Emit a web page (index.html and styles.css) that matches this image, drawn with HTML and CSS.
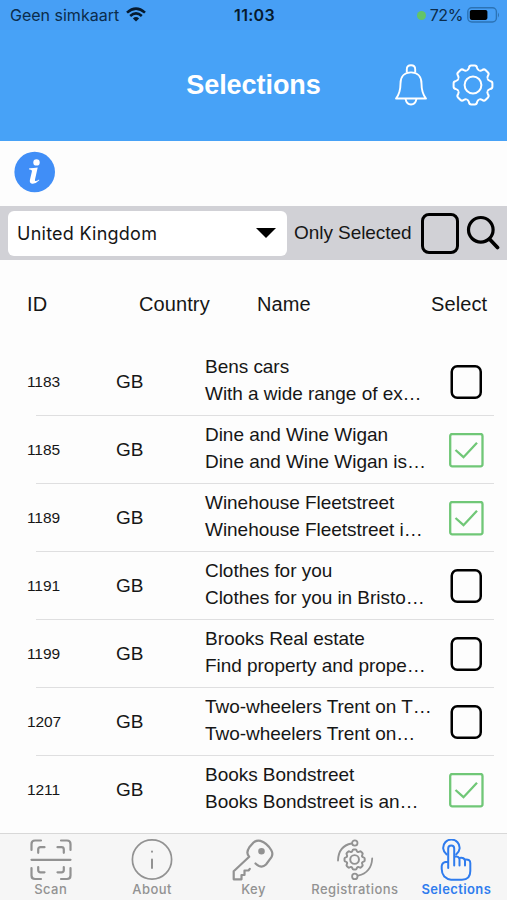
FILE: index.html
```html
<!DOCTYPE html>
<html lang="en">
<head>
<meta charset="utf-8">
<title>Selections</title>
<link rel="stylesheet" href="styles.css">
</head>
<body>
<svg class="defs" width="0" height="0">
  <defs>
    <path id="tooth" d="M-6.1-14.8Q-4.6-15-4.1-17Q-3.7-19.4-1.8-19.4H1.8Q3.7-19.4 4.1-17Q4.6-15 6.1-14.8"/>
    <g id="gear">
      <use href="#tooth"/><use href="#tooth" transform="rotate(45)"/><use href="#tooth" transform="rotate(90)"/><use href="#tooth" transform="rotate(135)"/><use href="#tooth" transform="rotate(180)"/><use href="#tooth" transform="rotate(225)"/><use href="#tooth" transform="rotate(270)"/><use href="#tooth" transform="rotate(315)"/>
      <circle r="8.4"/>
    </g>
    <g id="box"><rect x="2.75" y="1.25" width="29" height="31.5" rx="5.5" fill="none" stroke="#000" stroke-width="2.5"/></g>
    <g id="checked" fill="none" stroke="#70c777"><rect x="1.2" y="1" width="32.300" height="32.300" rx="2" stroke-width="2.300"/><path d="M6.500 17L14.500 24.200L28 9.700" stroke-width="2.300"/></g>
  </defs>
</svg>
<div class="status">
  <div class="carrier"><span>Geen simkaart</span>
    <svg width="20" height="15" viewBox="0 0 20 15" fill="none" stroke="#061a2e" stroke-width="2.600"><path d="M1 5.600Q10-2.400 19 5.600"/><path d="M4.200 9Q10 3.800 15.800 9"/><path d="M6.900 11.400Q10 8.800 13.100 11.400L10 14.600Z" fill="#061a2e" stroke="none"/></svg>
  </div>
  <div class="time">11:03</div>
  <div class="power"><i class="dot"></i><span>72%</span>
    <svg width="33" height="16" viewBox="0 0 33 16"><rect x=".8" y=".8" width="28.600" height="14.200" rx="4" fill="none" stroke="#2c73b5" stroke-width="1.400"/><rect x="2.800" y="2.900" width="17.600" height="10" rx="1.800"/><path d="M31 5.500Q33 8 31 10.500Z" fill="#2c73b5"/></svg>
  </div>
</div>
<header class="header">
  <h1>Selections</h1>
  <div class="actions">
    <svg width="34" height="42" viewBox="0 0 34 42" fill="none" stroke="#fff" stroke-width="1.900" stroke-linejoin="round"><path d="M12.800 8.500V5.200Q12.800 1.200 17 1.200T21.200 5.200V8.500"/><path d="M2 34.500Q6.500 29 6.500 19.500C6.500 12 11 8.400 17 8.400S27.500 12 27.500 19.500Q27.500 29 32 34.500Z"/><path d="M11.500 34.600Q12.500 40.500 17 40.500T22.500 34.600"/></svg>
    <svg width="42" height="42" viewBox="-21 -21 42 42" fill="none" stroke="#fff" stroke-width="2"><use href="#gear"/></svg>
  </div>
</header>
<div class="inforow">
  <svg width="42" height="42" viewBox="0 0 42 42"><circle cx="20.700" cy="21" r="20.300" fill="#408ef7"/><circle cx="22.500" cy="11.400" r="3.200" fill="#fff"/><path d="M15.200 17.200Q19 17.300 23.700 16.500L21 28.500Q20.600 30.500 22 30Q23.500 29.500 25 28.500L25.300 29.300Q21.500 33.200 18 32.700Q15.300 32 15.900 29L17.900 20.500Q18.300 18.600 15.200 18.500Z" fill="#fff"/></svg>
</div>
<div class="filter">
  <div class="dropdown"><span>United Kingdom</span><i class="caret"></i></div>
  <span class="only">Only Selected</span>
  <i class="toggle"></i>
  <svg width="34" height="36" viewBox="0 0 34 36" fill="none" stroke="#000" stroke-linecap="round"><circle cx="14.800" cy="14.800" r="12.300" stroke-width="3.200"/><path d="M23.700 24.200L31.500 32.500" stroke-width="3.700"/></svg>
</div>
<div class="grid thead"><span>ID</span><span class="h-country">Country</span><span class="h-name">Name</span><span class="h-select">Select</span></div>
<main class="rows">
  <div class="grid row"><span class="id">1183</span><span class="code">GB</span><div class="name"><p>Bens cars</p><p>With a wide range of ex…</p></div><svg class="mark"><use href="#box"/></svg></div>
  <div class="grid row"><span class="id">1185</span><span class="code">GB</span><div class="name"><p>Dine and Wine Wigan</p><p>Dine and Wine Wigan is…</p></div><svg class="mark"><use href="#checked"/></svg></div>
  <div class="grid row"><span class="id">1189</span><span class="code">GB</span><div class="name"><p>Winehouse Fleetstreet</p><p>Winehouse Fleetstreet i…</p></div><svg class="mark"><use href="#checked"/></svg></div>
  <div class="grid row"><span class="id">1191</span><span class="code">GB</span><div class="name"><p>Clothes for you</p><p>Clothes for you in Bristo…</p></div><svg class="mark"><use href="#box"/></svg></div>
  <div class="grid row"><span class="id">1199</span><span class="code">GB</span><div class="name"><p>Brooks Real estate</p><p>Find property and prope…</p></div><svg class="mark"><use href="#box"/></svg></div>
  <div class="grid row"><span class="id">1207</span><span class="code">GB</span><div class="name"><p>Two-wheelers Trent on T…</p><p>Two-wheelers Trent on…</p></div><svg class="mark"><use href="#box"/></svg></div>
  <div class="grid row"><span class="id">1211</span><span class="code">GB</span><div class="name"><p>Books Bondstreet</p><p>Books Bondstreet is an…</p></div><svg class="mark"><use href="#checked"/></svg></div>
</main>
<nav class="tabs">
  <div class="tab"><svg width="42" height="42" viewBox="0 0 42 42" stroke-width="2.200"><path d="M1.500 11V5Q1.500 1.500 5 1.500H11M31 1.500H37Q40.500 1.500 40.500 5V11M40.500 29V36.500Q40.500 40 37 40H31M11 40H5Q1.500 40 1.500 36.500V29M8.200 13.800V10.500Q8.200 8.200 10.500 8.200H14.500M27.500 8.200H31.500Q33.800 8.200 33.800 10.500V13.800M33.800 28V31Q33.800 33.300 31.500 33.300H27.500M14.500 33.300H10.500Q8.200 33.300 8.200 31V28M1.500 20.800H40.500"/></svg><span>Scan</span></div>
  <div class="tab"><svg width="42" height="42" viewBox="0 0 42 42" stroke-width="1.700"><circle cx="21" cy="20.500" r="19.600"/><path d="M21 20.500V29M21 12.500V12.700" stroke-width="2"/></svg><span>About</span></div>
  <div class="tab"><svg width="42" height="42" viewBox="0 0 42 42" stroke-width="2.200"><path d="M17.200 17.700Q13.500 14 17.300 8.300L21.500 3.500Q24.500 .8 28.500 1.900Q35 4 39.300 11.200Q41.400 15 39.300 18.300L34 25.500Q30.800 28.600 27 27Q25 26 23.500 24.500M17.200 17.700L1.700 32.300V40.300H9.500V36H12.500V31.500H16.500L17.800 29.800"/><circle cx="29.500" cy="12.300" r="2.200" fill="currentColor"/></svg><span>Key</span></div>
  <div class="tab"><svg width="42" height="42" viewBox="0 0 42 42" stroke-width="1.800"><path d="M4 21.500Q4.500 7 17.500 4.500M38.200 19.500Q37.500 33.500 24 36.700"/><circle cx="20.800" cy="4" r="2.700"/><circle cx="20.800" cy="37.400" r="2.700"/><g transform="translate(20.600 20.500) scale(.52)" stroke-width="3.800"><use href="#gear"/></g></svg><span>Registrations</span></div>
  <div class="tab active"><svg width="42" height="42" viewBox="0 0 42 42" stroke-width="2"><path d="M11.600 15.400A8.200 8.200 0 1 1 21.200 15.400"/><path d="M13.200 29V9.500Q13.200 6.400 16.200 6.400T19.200 9.500V26.500M19.200 17.700Q24 16.500 24.500 20.500V26.500M24.500 19Q29.500 18 30 22V26.500M30 20.500Q35.300 20 35.300 24V32Q35.300 40.700 27 40.700H16Q12.500 40.500 9.300 37.500Q6.700 34.500 6.700 30V27Q7 22.700 13.200 22.700"/></svg><span>Selections</span></div>
</nav>
</body>
</html>
```
FILE: styles.css
```css
* { box-sizing: border-box; }
body {
  margin: 0;
  width: 507px;
  height: 900px;
  overflow: hidden;
  display: flex;
  flex-direction: column;
  background: #fdfdfd;
  color: #161616;
  font: 19px "Liberation Sans", Arial, sans-serif;
  letter-spacing: -.04px;
}
.defs { position: absolute; }
p, h1 { margin: 0; }
svg { display: block; flex: none; }

.status {
  height: 30px;
  padding: 0 7px 0 10px;
  display: grid;
  grid-template-columns: 1fr auto 1fr;
  align-items: center;
  background: #479ff5;
  color: #0b2c4b;
  font: 16px/30px Inter, sans-serif;
  letter-spacing: 0;
}
.carrier, .power { display: flex; align-items: center; }
.carrier { gap: 7px; }
.carrier svg { margin-top: -1px; }
.power { justify-content: flex-end; gap: 4px; letter-spacing: -.4px; }
.power svg { margin-top: -1px; }
.time { font-weight: 600; color: #061a2e; letter-spacing: .3px; margin-left: -1px; }
.dot { width: 9px; height: 9px; border-radius: 50%; background: #63c466; }

.header {
  height: 111px;
  padding-bottom: 2px;
  display: grid;
  grid-template-columns: 1fr auto 1fr;
  align-items: center;
  background: #47a2f7;
}
.header h1 {
  grid-column: 2;
  color: #fff;
  font-size: 27px;
  line-height: 30px;
  letter-spacing: -.05px;
}
.actions { display: flex; justify-content: flex-end; gap: 24px; padding-right: 13px; }

.inforow { height: 65px; padding: 10px 0 0 14px; }

.filter {
  height: 54px;
  padding: 0 7px 0 8px;
  display: flex;
  align-items: center;
  background: #d1d1d6;
}
.dropdown {
  width: 279px;
  height: 45px;
  padding: 0 11px 0 9px;
  border-radius: 6px;
  display: flex;
  align-items: center;
  justify-content: space-between;
  background: #fff;
  font: 18px Inter, sans-serif;
  letter-spacing: .25px;
}
.caret { border: 10px solid transparent; border-top-color: #000; border-bottom: 0; }
.only { width: 127px; margin-left: 7px; letter-spacing: -.06px; }
.toggle { width: 38px; height: 41px; border: 3px solid #000; border-radius: 8px; margin-right: 7px; }

.grid {
  display: grid;
  grid-template-columns: 89px 89px 244px 36px;
  align-items: center;
}
.thead {
  height: 87px;
  padding: 2px 0 0 27px;
  font-size: 20px;
  letter-spacing: .1px;
}
.h-country { margin-left: 23px; }
.h-name { margin-left: 52px; }
.h-select { margin-left: -18px; }
.row { height: 68px; padding-left: 27px; position: relative; }
.row::after {
  content: "";
  position: absolute;
  left: 36px;
  right: 13px;
  bottom: -1px;
  height: 1.5px;
  background: #dfdfe0;
}
.row:last-child::after { display: none; }
.id { font-size: 15.5px; letter-spacing: -.1px; padding-top: 1px; }
.code { padding-top: 1px; }
.name { padding-bottom: 2px; }
.name p { line-height: 27px; white-space: nowrap; }
.mark { width: 35px; height: 35px; margin-top: 2px; }

.tabs {
  height: 67px;
  margin-top: auto;
  border-top: 1.5px solid #d8d8d8;
  padding-top: 5px;
  display: grid;
  grid-template-columns: repeat(5, 1fr);
  background: #f6f6f6;
}
.tab {
  display: flex;
  flex-direction: column;
  align-items: center;
  color: #929292;
  font: 500 13px/16px Inter, sans-serif;
  letter-spacing: .45px;
}
.tab svg { fill: none; stroke: currentColor; stroke-linecap: round; stroke-linejoin: round; }
.active { color: #2f7cee; font-weight: 600; letter-spacing: .4px; }
```
